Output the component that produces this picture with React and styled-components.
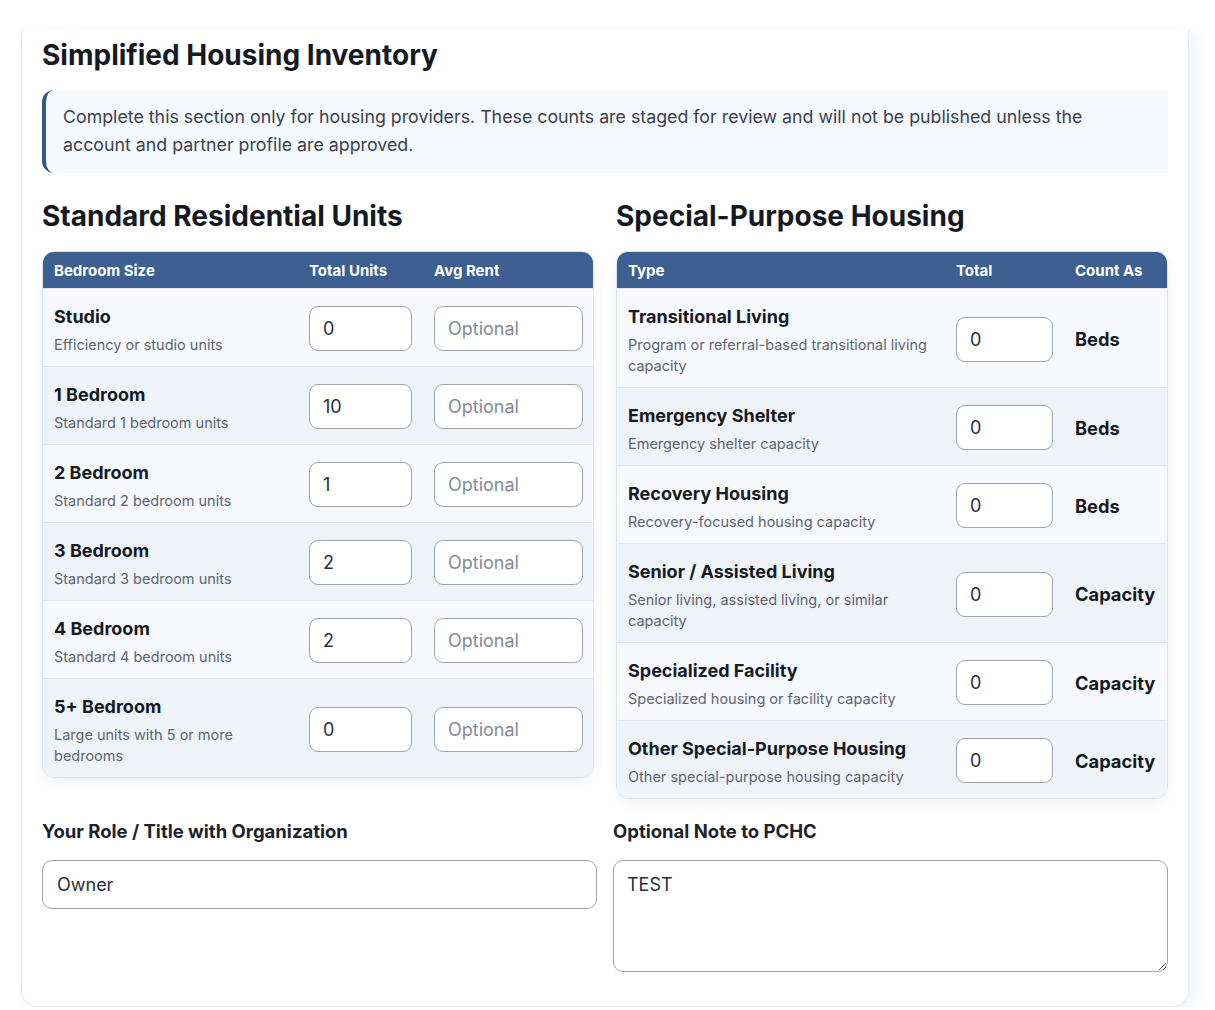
import React from 'react';
import styled, { createGlobalStyle } from 'styled-components';

const GlobalStyle = createGlobalStyle`
  body {
    margin: 0;
    background: #ffffff;
    font-family: 'Inter', 'Noto Sans', sans-serif;
    color: #151a24;
  }
  * { box-sizing: border-box; }
`;

const Card = styled.div`
  margin: 30px 0 0 21px;
  width: 1168px;
  background: #fff;
  border: 1px solid #e7ebf1;
  border-top: none;
  border-radius: 0 0 16px 16px;
  box-shadow: 8px 4px 16px rgba(40, 60, 100, 0.06);
  padding: 8px 20px 34px 20px;
`;

const Title = styled.h2`
  margin: 0;
  font-size: 28px;
  line-height: 34px;
  font-weight: 700;
  color: #141923;
`;

const Callout = styled.div`
  margin-top: 18px;
  background: #f5f8fc;
  border-left: 4px solid #36568a;
  border-radius: 12px 0 0 12px;
  padding: 13px 40px 14px 17px;
  font-size: 17.8px;
  line-height: 28px;
  color: #3b414c;
`;

const Columns = styled.div`
  display: grid;
  grid-template-columns: 1fr 1fr;
  gap: ${(p) => p.gap || 22}px;
  align-items: start;
  margin-top: ${(p) => p.top || 0}px;
`;

const SectionTitle = styled.h3`
  margin: 0 0 18px;
  font-size: 28px;
  line-height: 34px;
  font-weight: 700;
  color: #141923;
`;

const Table = styled.div`
  border: 1px solid #dfe5ee;
  border-radius: 12px;
  overflow: hidden;
  box-shadow: 0 4px 12px rgba(40, 60, 100, 0.07);
`;

const HeadRow = styled.div`
  display: grid;
  grid-template-columns: ${(p) => p.cols};
  column-gap: 22px;
  align-items: center;
  height: 36px;
  padding: 0 10px 0 11px;
  background: #3d5f92;
  color: #ffffff;
  font-size: 15px;
  font-weight: 700;
`;

const Row = styled.div`
  display: grid;
  grid-template-columns: ${(p) => p.cols};
  column-gap: 22px;
  align-items: center;
  min-height: 78px;
  padding: 17px 10px 11px 11px;
  background: ${(p) => (p.shade ? '#eff3f8' : '#f6f8fb')};
  border-top: 1px solid #dfe5ee;
`;

const Name = styled.div`
  font-size: 18px;
  line-height: 22px;
  font-weight: 700;
  color: #151a24;
`;

const Desc = styled.div`
  margin-top: 6px;
  font-size: 14.5px;
  line-height: 21px;
  color: #5f6571;
`;

const CellInput = styled.input`
  width: 100%;
  height: 45px;
  margin-top: -4px;
  border: 1px solid #9ea4ad;
  border-radius: 9px;
  background: #fff;
  padding: 0 13px;
  font-family: inherit;
  font-size: 18px;
  color: #2a2f38;
  outline: none;
  &::placeholder {
    color: #858b94;
  }
`;

const Unit = styled.div`
  margin-top: -4px;
  font-size: 18.3px;
  font-weight: 700;
  color: #151a24;
`;

const FieldLabel = styled.label`
  display: block;
  font-size: 18.5px;
  line-height: 22px;
  font-weight: 700;
  color: #1d222c;
  margin-bottom: 18px;
`;

const TextInput = styled.input`
  width: 100%;
  height: 49px;
  border: 1px solid #9ea4ad;
  border-radius: 10px;
  padding: 0 14px;
  font-family: inherit;
  font-size: 18px;
  color: #2a2f38;
  outline: none;
`;

const NoteArea = styled.textarea`
  display: block;
  width: 100%;
  height: 112px;
  border: 1px solid #9ea4ad;
  border-radius: 10px;
  padding: 13px 13px;
  font-family: inherit;
  font-size: 18px;
  color: #2a2f38;
  outline: none;
  resize: vertical;
`;

const standard = [
  { name: 'Studio', desc: 'Efficiency or studio units', total: '0' },
  { name: '1 Bedroom', desc: 'Standard 1 bedroom units', total: '10' },
  { name: '2 Bedroom', desc: 'Standard 2 bedroom units', total: '1' },
  { name: '3 Bedroom', desc: 'Standard 3 bedroom units', total: '2' },
  { name: '4 Bedroom', desc: 'Standard 4 bedroom units', total: '2' },
  { name: '5+ Bedroom', desc: 'Large units with 5 or more bedrooms', total: '0' },
];

const special = [
  { name: 'Transitional Living', desc: 'Program or referral-based transitional living capacity', unit: 'Beds' },
  { name: 'Emergency Shelter', desc: 'Emergency shelter capacity', unit: 'Beds' },
  { name: 'Recovery Housing', desc: 'Recovery-focused housing capacity', unit: 'Beds' },
  { name: 'Senior / Assisted Living', desc: 'Senior living, assisted living, or similar capacity', unit: 'Capacity' },
  { name: 'Specialized Facility', desc: 'Specialized housing or facility capacity', unit: 'Capacity' },
  { name: 'Other Special-Purpose Housing', desc: 'Other special-purpose housing capacity', unit: 'Capacity' },
];

const STD_COLS = '1fr 103px 149px';
const SPC_COLS = '1fr 97px 82px';

const App = () => {
  return (
    <>
      <GlobalStyle />
      <Card>
        <Title>Simplified Housing Inventory</Title>
        <Callout>
          Complete this section only for housing providers. These counts are staged for review and will not be
          published unless the account and partner profile are approved.
        </Callout>

        <Columns top={26}>
          <div>
            <SectionTitle>Standard Residential Units</SectionTitle>
            <Table>
              <HeadRow cols={STD_COLS}>
                <span>Bedroom Size</span>
                <span>Total Units</span>
                <span>Avg Rent</span>
              </HeadRow>
              {standard.map((r, i) => (
                <Row key={r.name} cols={STD_COLS} shade={i % 2 === 1}>
                  <div>
                    <Name>{r.name}</Name>
                    <Desc>{r.desc}</Desc>
                  </div>
                  <CellInput defaultValue={r.total} />
                  <CellInput placeholder="Optional" />
                </Row>
              ))}
            </Table>
          </div>
          <div>
            <SectionTitle>Special-Purpose Housing</SectionTitle>
            <Table>
              <HeadRow cols={SPC_COLS}>
                <span>Type</span>
                <span>Total</span>
                <span>Count As</span>
              </HeadRow>
              {special.map((r, i) => (
                <Row key={r.name} cols={SPC_COLS} shade={i % 2 === 1}>
                  <div>
                    <Name>{r.name}</Name>
                    <Desc>{r.desc}</Desc>
                  </div>
                  <CellInput defaultValue="0" />
                  <Unit>{r.unit}</Unit>
                </Row>
              ))}
            </Table>
          </div>
        </Columns>

        <Columns gap={16} top={21}>
          <div>
            <FieldLabel>Your Role / Title with Organization</FieldLabel>
            <TextInput defaultValue="Owner" />
          </div>
          <div>
            <FieldLabel>Optional Note to PCHC</FieldLabel>
            <NoteArea defaultValue="TEST" />
          </div>
        </Columns>
      </Card>
    </>
  );
};

export default App;
